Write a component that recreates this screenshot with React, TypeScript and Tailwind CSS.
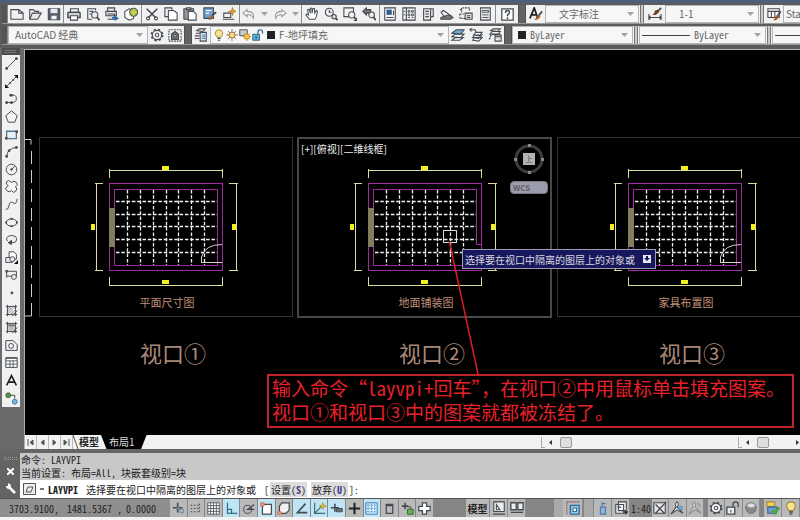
import React from "react";

const INK = "#444a52";
const BLUE = "#4e86b4";

const glyphs = {
  newFile: <path d="M1 3h9l5 4v7H1zM10 3v4h5" />,
  open: (
    <>
      <path d="M2 14V3h4l2 2h4v2" />
      <path d="M2 14l3-7h10l-4 7z" fill="#e8e8e8" />
    </>
  ),
  save: (
    <>
      <path d="M1.500 2h13v12.500h-13z" fill="#59616b" />
      <path d="M4 2h8v5H4z" fill="#e6e9ec" stroke="none" />
      <path d="M5 10h6v4H5z" fill="#f4f4f4" stroke="none" />
    </>
  ),
  print: (
    <>
      <path d="M4 6V2h9v4" />
      <path d="M1 7q0-1 1-1h12q1 0 1 1v5H1z" fill="#cfd2d6" strokeWidth="1.600" />
      <path d="M4 10h8v5H4z" fill="#fff" />
    </>
  ),
  preview: (
    <>
      <path d="M11 4V2H2v12h5M4 5h4M4 8h2" />
      <circle cx="10" cy="9" r="3.500" fill="#e8eef3" />
      <path d="M12.500 11.500l3 3.500" strokeWidth="2" />
    </>
  ),
  publish: (
    <>
      <path d="M3 5V1h8v4M1 5h12v5H1zM3 8h8v6H3" fill="#e4e4e4" />
      <path d="M8 11.500h3v-2.500l5 4-5 3v-2.500H8z" fill="#2c6fae" stroke="none" />
    </>
  ),
  sphere: (
    <>
      <path d="M1 5l5-3 5 2v9l-5 2-5-3z" fill="#fff" />
      <circle cx="11" cy="6" r="4.500" fill="#a3c34a" />
      <path d="M11 2v8M7 6h8" stroke="#e8d24a" />
    </>
  ),
  cut: (
    <>
      <path d="M2 2l10 10M14 2L4 12" strokeWidth="1.700" />
      <circle cx="3.500" cy="13" r="1.700" />
      <circle cx="12.500" cy="13" r="1.700" />
    </>
  ),
  copy: (
    <>
      <path d="M1 1h8v10H1z" />
      <path d="M5 4h6l4 3v8H5z" fill="#fff" />
    </>
  ),
  paste: (
    <>
      <path d="M1 2h11v12H1z" fill="#999" />
      <path d="M4 1h5v2H4z" fill="#eee" />
      <path d="M6 5h6l3 3v7H6z" fill="#fff" />
    </>
  ),
  match: (
    <>
      <path d="M1 1h11v12H1z" fill="#6fa0d0" />
      <path d="M3 4h7M3 7h4" stroke="#fff" />
      <path d="M15 6l-5 4" strokeWidth="2" />
      <path d="M11 9l2 2q-3 5-7 3 3-1 3-4z" fill="#a65a22" stroke="none" />
    </>
  ),
  blockEdit: (
    <>
      <path d="M2 7h8v5H2zM1 14h13" />
      <path d="M12 1l1 3 3 1-3 1-1 3-1-3-3-1 3-1z" fill="#e5a83a" stroke="#c58a2a" />
    </>
  ),
  undo: <path d="M6 3L1 7l5 4V9q5-1 7 4 2-8-7-8z" stroke="#999" fill="#f2f2f2" />,
  redo: <path d="M10 3l5 4-5 4V9q-5-1-7 4-2-8 7-8z" stroke="#999" fill="#f2f2f2" />,
  hand: (
    <path
      d="M5 14L1 9q1-2 3 0L3 3q1-1 2 0l1 4V2q1-1.500 2 0v5l1-5q1.500-1 2 0v5l2-3q1.500 0 1 2-1 7-3 8z"
      fill="#fff"
    />
  ),
  zoom: (
    <>
      <circle cx="6" cy="6" r="4.500" />
      <path d="M6 3.500V6h2.500M9.500 9.500l1 1" />
      <circle cx="11.500" cy="11" r="2.500" fill="#ddd" />
      <path d="M13.500 13l2 2" strokeWidth="2" />
    </>
  ),
  zoomWin: (
    <>
      <path d="M1 1h11v10H1z" />
      <circle cx="10" cy="9" r="3.500" fill="#f2f2f2" />
      <path d="M12.500 11.500l2 2" strokeWidth="2" />
      <path d="M16 12v4h-4z" fill={INK} stroke="none" />
    </>
  ),
  zoomPrev: (
    <>
      <path d="M1 5l4-4v2h5v4H5v2z" fill="#777" />
      <circle cx="11" cy="9" r="3.200" fill="#f2f2f2" />
      <path d="M13 11.500l3 3.500" strokeWidth="2" />
    </>
  ),
  properties: (
    <>
      <path d="M2 1h12v14H2z" fill="#f8f8f8" />
      <path d="M4 3h6v6H4z" fill="#2d5c96" stroke="none" />
      <path d="M12 4v5M4 12h8" />
    </>
  ),
  design: (
    <>
      <path d="M1 1h14v14H1zM5 1v14" />
      <path d="M7 4h2v2H7zM11 4h2v2h-2zM7 8h2v2H7zM11 8h2v2h-2zM7 12h2M11 12h2M2 5h2M2 9h2" strokeWidth="1" />
    </>
  ),
  palette: (
    <>
      <path d="M3 2h8v13H3zM11 2h3v9h-3z" fill="#e8e8e8" />
      <path d="M5 5h4M5 8h4M5 11h4" />
    </>
  ),
  sheets: (
    <>
      <path d="M1 12l9-3 5 3-3 2-11 0z" fill="#777" />
      <path d="M1 6l3-2 10 7M1 6l5 6" />
    </>
  ),
  markup: (
    <>
      <path d="M3 6V1h9v4M1 3h2M1 8h8v5H1z" strokeDasharray="2 1" />
      <path d="M7 7h8v7H7z" fill="#e4e4e4" />
      <path d="M9 10h4M9 12h4" />
    </>
  ),
  calc: (
    <>
      <path d="M3 1h11v14H3z" fill="#e8e8e8" />
      <path d="M5 4h7v2H5zM5 9h7M5 12h7" strokeWidth="1" />
    </>
  ),
  help: (
    <>
      <path d="M1 1h14v14H1z" fill="#fff" strokeWidth="1.500" />
      <path d="M5.500 6q0-3 2.500-3t2.500 2.500Q10.500 7 8 8.500v1.500M8 11.500v2" strokeWidth="1.800" />
    </>
  ),
  textStyle: (
    <>
      <path d="M1 13L6 1l4 12M3 9h6" strokeWidth="2" stroke="#222" />
      <path d="M15 5l-4 5" strokeWidth="2" />
      <path d="M11 9l2 2q-3 5-7 3 3-1 3-4z" fill="#a65a22" stroke="none" />
    </>
  ),
  dimStyle: (
    <>
      <path d="M1 8v7M15 8v7M1 12h14M3 10l-2 2 2 2M13 10l2 2-2 2" />
      <path d="M15 1l-4 4" strokeWidth="2" />
      <path d="M11 3l2 2q-3 5-8 4 3-2 3-5z" fill="#7a3d22" stroke="none" />
    </>
  ),
  tableStyle: (
    <>
      <path d="M1 2h13v10H1zM1 5h13M5 5v7M9 5v7" fill="#fff" />
      <path d="M16 5l-4 5" strokeWidth="2" />
      <path d="M12 9l2 2q-3 5-7 4 3-2 3-5z" fill="#a65a22" stroke="none" />
    </>
  ),
  gear: (
    <>
      <circle cx="8" cy="8" r="6.300" strokeDasharray="2.600 2.400" strokeWidth="2" />
      <circle cx="8" cy="8" r="5.300" fill="#f4f4f4" />
      <circle cx="8" cy="8" r="2" />
    </>
  ),
  workspace: (
    <>
      <path d="M1 2h14v13H1z" strokeDasharray="2 1" />
      <path d="M4 13V7l4-3 4 3v6z" fill="#777" />
      <circle cx="8" cy="9" r="1.500" fill="#ddd" />
    </>
  ),
  layerProps: (
    <>
      <path d="M3 3l3-2h7l-3 3zM2 6h5M1 9h5M1 12h5" />
      <path d="M7 5h7v10H7z" fill="#dce9f2" />
      <path d="M9 8h4M9 10h4M9 12h4" stroke={BLUE} />
    </>
  ),
  bulb: (
    <>
      <path d="M5.500 11Q3 8 3 5.500 3.500 1 8 1t5 4.500Q13 8 10.500 11z" fill="#f8e48a" stroke="#9c8640" />
      <path d="M6 12.500h4M6.500 15h3" strokeWidth="1.600" />
    </>
  ),
  sun: (
    <>
      <path d="M8 0v16M0 8h16M2.500 2.500l11 11M13.500 2.500l-11 11" stroke="#8f7756" />
      <circle cx="8" cy="8" r="4" fill="#f7d98a" stroke="#9a6f35" />
    </>
  ),
  sunVp: (
    <>
      <path d="M1 1h10v8H1z" fill="#ccc" />
      <path d="M5 10h11M10.500 5v11M7 6l7 8M14 6l-7 8" stroke="#c88a20" />
      <circle cx="10.500" cy="10" r="3.500" fill="#f9c54e" stroke="#c88a20" />
    </>
  ),
  unlock: (
    <>
      <path d="M1 7h9v8H1z" fill="#5fb1d8" stroke="#28627f" />
      <path d="M8 7V4q0-3 3-3t3 3v2" strokeWidth="1.600" stroke="#28627f" />
      <path d="M5.500 10v3" stroke="#123" />
    </>
  ),
  layersA: (
    <>
      <path d="M1 14l4-3h9l-4 3zM1 10l4-3h10l-4 4z" fill="#fff" />
      <path d="M1 6l5-4h9l-4 5z" fill="#6ea9cf" />
    </>
  ),
  layersB: (
    <>
      <path d="M4 14l3-3h8l-4 4zM4 11l3-3h8l-4 4zM5 8l3-3h7l-3 4z" fill="#fff" />
      <path d="M1 2h5q2 0 2 3M3 0L1 2l2 2" />
    </>
  ),
  layersC: (
    <>
      <path d="M2 10l3-3h9M2 7l3-3h9l-3 4zM3 3l3-2h8l-3 3zM1 13l2-2" />
      <path d="M8 8h7v7H8z" fill="#e4e4e4" />
      <path d="M8 10h7" />
    </>
  ),
  line: (
    <>
      <path d="M2 14L14 2" />
      <path d="M1 13h2v2H1zM13 1h2v2h-2z" fill={INK} />
    </>
  ),
  xline: (
    <>
      <path d="M2 14L14 2" />
      <path d="M0 11v5h5zM16 0v5l-5-5z" fill="#111" stroke="none" />
      <path d="M5 9h2v2H5zM9 5h2v2H9z" fill={INK} stroke="none" />
    </>
  ),
  pline: (
    <>
      <path d="M1 13h7q6 0 6-5t-6-4" />
      <path d="M1 12h2v2H1zM7 12h2v2H7zM6 3h3v2H6z" fill={INK} />
    </>
  ),
  polygon: <path d="M8 1l7 6-3 8H4L1 7z" fill="#f4f6f8" />,
  rect: (
    <>
      <path d="M2 4h12v9H2z" fill="#e9f0f5" stroke="#56788e" strokeWidth="1.600" />
      <path d="M0 11h3v3H0zM13 3h3v3h-3z" fill={INK} stroke="none" />
    </>
  ),
  arc: (
    <>
      <path d="M2 14Q3 4 14 3" />
      <path d="M1 13h2v2H1zM4 6h2v2H4zM13 2h2v2h-2z" fill={INK} />
    </>
  ),
  circle: (
    <>
      <circle cx="8" cy="8" r="6.500" />
      <path d="M8 8l4-4" />
      <circle cx="8" cy="8" r="1" fill={INK} />
    </>
  ),
  cloud: (
    <path
      d="M4 7Q0 5 2 2t6 1q3-3 6 0t-1 5q3 3 0 6t-5-1q-3 3-6 0t2-6z"
      fill="#f6f6f6"
    />
  ),
  spline: <path d="M1 14q3 1 4-5t5-3 5-5" />,
  ellipse: (
    <>
      <ellipse cx="8" cy="8" rx="6.500" ry="4.500" />
      <path d="M7 3h2v1H7zM7 12h2v1H7zM1 7h1v2H1zM14 7h1v2h-1z" fill={INK} />
    </>
  ),
  ellipseArc: (
    <>
      <path d="M3 10Q0 6 4 4t8 0 1 7l-5 1" />
      <path d="M8 9v5l-4-2z" fill={INK} />
    </>
  ),
  insertBlock: (
    <>
      <path d="M5 1h6l3 3v6H5z" fill="#fff" />
      <path d="M1 8h8v6H1z" fill="#eee" />
      <circle cx="9" cy="10" r="3" fill="#eee" />
      <path d="M16 11v5h-5z" fill="#111" stroke="none" />
    </>
  ),
  makeBlock: (
    <>
      <path d="M2 4h12v6H2zM1 3h2v2H1zM1 11h2" />
      <circle cx="11" cy="11" r="3" fill="#eee" />
    </>
  ),
  point: <path d="M7 7h3v3H7z" fill={INK} stroke="none" />,
  hatch: (
    <>
      <path d="M3 1v14M13 1v14M1 3h14M1 13h14" />
      <path d="M4 6l3-3M4 9l6-6M4 12l8-8M7 13l5-5M5 4l7 8M4 7l5 5" strokeWidth="1" strokeDasharray="1 1" />
      <path d="M9 15l6-7" />
    </>
  ),
  gradient: (
    <>
      <path d="M3 1v14M13 1v14M1 3h14M1 13h14" />
      <path d="M4 4h8v3H4z" fill="#777" stroke="none" />
      <path d="M4 7h8v5H4z" fill="#bbb" stroke="none" />
      <path d="M9 15l6-7" />
    </>
  ),
  region: (
    <>
      <path d="M1 2h9l5 5v7H1z" fill="#f3f3f3" />
      <circle cx="7.500" cy="8.500" r="3" />
    </>
  ),
  table: (
    <>
      <path d="M1 2h14v12H1z" fill="#fff" />
      <path d="M1 3h14M1 6h14M1 10h14M6 5v9M10 5v9" strokeWidth="1" />
    </>
  ),
  mtext: <path d="M2 14L8 2l6 12M4 10h8" stroke="#222" strokeWidth="2" />,
  addSel: (
    <>
      <path d="M6 4h6v4" />
      <circle cx="4" cy="4" r="3" fill="#5c9a48" stroke="#3e6d31" />
      <circle cx="12" cy="12" r="3" fill="#7ab4dc" stroke="#3f78a3" />
    </>
  ),
  infer: (
    <>
      <path d="M7 1v12M1 7h12" strokeWidth="2" />
      <path d="M5 5h4v4H5z" fill="#777" stroke="none" />
      <circle cx="12" cy="11" r="2.500" stroke={BLUE} />
    </>
  ),
  snap: <path d="M2 4h10M2 8h10M2 12h10M13 2v12" strokeDasharray="2 2" />,
  grid: (
    <path
      d="M1 1h14v14H1zM1 4.500h14M1 8h14M1 11.500h14M4.500 1v14M8 1v14M11.500 1v14"
      fill="#fff"
      strokeWidth="1"
    />
  ),
  ortho: <path d="M3 1v13h12M3 9h5v5" stroke="#2f6f87" strokeWidth="1.500" />,
  polar: (
    <>
      <circle cx="7" cy="9" r="5" />
      <path d="M15 3L7 9h8M10 6v4" strokeWidth="1.500" />
    </>
  ),
  osnap: (
    <>
      <path d="M3 3h11v12H3z" fill="#fff" strokeWidth="1.500" />
      <path d="M1 1h4v4H1z" fill="#f5a28a" stroke="#c96e50" />
    </>
  ),
  osnap3d: (
    <>
      <path d="M3 5l3-4h9v9l-4 4H3z" fill="#f1f1f1" strokeWidth="1.500" />
      <path d="M1 12h4v3H1z" fill="#f5a28a" stroke="#c96e50" />
    </>
  ),
  otrack: <path d="M13 2L3 13h12" strokeWidth="2" />,
  ducs: (
    <>
      <path d="M2 1v13h13M2 14l8-8" stroke="#3c6f85" strokeWidth="1.500" />
      <path d="M12 1l1 3 3 1-3 1-1 3-1-3-3-1 3-1z" fill="#efcf4a" stroke="#b79024" />
    </>
  ),
  dyn: (
    <>
      <path d="M6 2v10M1 7h10" strokeWidth="2" />
      <path d="M8 8h7v4H8z" fill="#68757d" />
    </>
  ),
  lwt: <path d="M8 1v14M1 8h14" strokeWidth="2.500" stroke="#222" />,
  transparency: (
    <>
      <path d="M1 1h14v14H1z" fill="#dff1fb" stroke="#3c78b4" />
      <path d="M2 4h12M2 8h12M2 12h12M4 2v12M8 2v12M12 2v12" stroke="#5f9fd6" strokeDasharray="2 1" />
    </>
  ),
  quickProps: <path d="M4 3h8v11H4zM4 4.500h8" strokeWidth="1.500" />,
  cycling: (
    <>
      <path d="M5 1v8M1 5h8" strokeWidth="2" />
      <path d="M8 6h4v3" />
      <path d="M8 9h7v6H8z" fill="#63b356" stroke="#346b2c" />
    </>
  ),
  annoMon: <path d="M5.500 1h5v4.500H15v5h-4.500V15h-5v-4.500H1v-5h4.500z" fill="#fff" strokeWidth="1.500" />,
  maxVp: (
    <>
      <path d="M2 1h12v11H2zM1 15h14" fill="#eee" />
      <path d="M5 10V4l4 6z" />
    </>
  ),
  quickView: <path d="M1 2h6v8H1zM9 2h6v8H9zM1 13h14" fill="#eee" strokeWidth="1.500" />,
  vpScale: (
    <>
      <path d="M5 5h10v10H5z" fill="#9cc8e6" stroke="#2f6ea0" strokeWidth="1.600" />
      <path d="M8 8h4v4H8z" fill="#fff" stroke="#2f6ea0" />
      <path d="M1 1h14M1 1v14" stroke="#9b4e4e" strokeDasharray="2 1" />
    </>
  ),
  bottle: (
    <>
      <path d="M5 7h6v8H5z" fill="#8db5dc" stroke="#4c79a4" />
      <path d="M7 1v5M7 3h4" stroke="#4c79a4" />
    </>
  ),
  vpLock: (
    <>
      <path d="M5 1h9v10H5zM2 4h9v10H2z" fill="#f2f2f2" />
      <path d="M4 7h4M11 12h5l-2.500 3z" fill="#222" />
    </>
  ),
  annoScale: (
    <>
      <path d="M1 2h13v12H1z" fill="#e6e6e6" />
      <path d="M15 1L3 14M3 4l10 10" strokeWidth="1.500" />
    </>
  ),
  annoVis: (
    <>
      <path d="M8 1q3 2 0 6l7 7-7-4-7 5 6-8q-2-4 1-6z" fill="#f8f8f8" />
      <circle cx="12" cy="8" r="2" fill="#86b6df" stroke={BLUE} />
    </>
  ),
  annoAuto: (
    <path d="M7 1q3 2 1 6l7 7-7-4-7 5 5-8q-2-4 1-6zM11 2l3 4" fill="#ccc" stroke="#8b8b8b" />
  ),
  lockUi: (
    <>
      <path d="M1 7h9v8H1z" fill="#eee" strokeWidth="1.500" />
      <path d="M8 7V4q0-3 3-3t3 3v3" strokeWidth="1.500" />
      <path d="M5.500 10v3" />
    </>
  ),
  isolate: (
    <>
      <circle cx="8" cy="8" r="6" fill="#888" stroke="#777" />
      <path d="M3 5q6 5 10 0Q8 0 3 5z" fill="#ddd" stroke="none" />
    </>
  ),
  hardware: (
    <>
      <path d="M1 1h9v5H1z" fill="#f4d65c" stroke="#a58525" />
      <path d="M2 7h10v7H2z" fill="#6a9fd0" stroke="#39658f" />
      <path d="M7 11l3 3 5-7" stroke="#4da63a" strokeWidth="3" />
    </>
  ),
};

type GlyphName = keyof typeof glyphs;

const Icon = ({ name, size = 14 }: { name: GlyphName; size?: number }) => (
  <svg
    width={size}
    height={size}
    viewBox="0 0 16 16"
    fill="none"
    stroke={INK}
    strokeWidth="1.200"
    className="shrink-0"
    aria-hidden="true"
  >
    {glyphs[name]}
  </svg>
);

const ToolButton = ({ name, size }: { name: GlyphName; size?: number }) => (
  <button aria-label={name} className="flex items-center justify-center">
    <Icon name={name} size={size} />
  </button>
);

const Caret = () => (
  <svg width="7" height="4" viewBox="0 0 7 4" className="shrink-0 pointer-events-none" aria-hidden="true">
    <path d="M0 0h7L3.500 4z" fill="#a3a3a3" />
  </svg>
);

const Group = ({ names, className }: { names: GlyphName[]; className: string }) => (
  <div className={`flex items-center justify-around shrink-0 border-r border-[#8a8a8a] ${className}`}>
    {names.map((name) => (
      <ToolButton key={name} name={name} />
    ))}
  </div>
);

const Grip = () => (
  <div className="w-1 mx-px shrink-0 border-x border-[#777] bg-[#c9c9c9]" />
);

const DockGap = () => (
  <div className="w-2 shrink-0 bg-[#626262] border-x border-[#505050]" />
);

const Picker = ({
  label,
  value,
  className,
  children,
}: {
  label: string;
  value: string;
  className: string;
  children?: React.ReactNode;
}) => (
  <div className={`flex items-center pr-1 border border-[#b5b5b5] bg-[#f7f7f7] ${className}`}>
    {children}
    <select
      aria-label={label}
      className="appearance-none flex-1 min-w-0 h-4 leading-4 bg-transparent text-[10px] text-[#666] outline-none"
    >
      <option>{value}</option>
    </select>
    <Caret />
  </div>
);

const Toolbars = () => (
  <header className="shrink-0 bg-[#5c5c5c] border-t-3 border-[#4c6177] pt-0.5 pl-0.5">
    <div className="flex h-[19px] bg-[#f1f1f1] overflow-hidden border-b border-[#999]">
      <div className="w-[6px] shrink-0 bg-[#555] border-r border-[#888]" />
      <Group className="w-[56px]" names={["newFile", "open", "save"]} />
      <Group className="w-[78px]" names={["print", "preview", "publish", "sphere"]} />
      <Group className="w-[98px]" names={["cut", "copy", "paste", "match", "blockEdit"]} />
      <div className="flex w-[62px] shrink-0 items-center justify-around border-r border-[#8a8a8a]">
        <ToolButton name="undo" />
        <Caret />
        <ToolButton name="redo" />
        <Caret />
      </div>
      <Group className="w-[78px]" names={["hand", "zoom", "zoomWin", "zoomPrev"]} />
      <Group
        className="w-[116px]"
        names={["properties", "design", "palette", "sheets", "markup", "calc"]}
      />
      <div className="flex w-[22px] shrink-0 items-center justify-center">
        <ToolButton name="help" size={13} />
      </div>
      <DockGap />
      <div className="flex w-[19px] shrink-0 items-center justify-center">
        <ToolButton name="textStyle" />
      </div>
      <Picker label="文字样式" value="文字标注" className="w-[94px] shrink-0 pl-[13px]" />
      <Grip />
      <div className="flex w-5 shrink-0 items-center justify-center">
        <ToolButton name="dimStyle" />
      </div>
      <Picker label="标注样式" value="1-1" className="w-[94px] shrink-0 pl-[13px]" />
      <Grip />
      <div className="flex w-[18px] shrink-0 items-center justify-center">
        <ToolButton name="tableStyle" />
      </div>
      <Picker label="表格样式" value="Standard" className="min-w-[94px] flex-1 pl-[2px]" />
    </div>

    <div className="mt-0.5 mb-[3px] flex h-[19px] bg-[#f1f1f1] overflow-hidden border-b border-[#999]">
      <div className="w-[6px] shrink-0 bg-[#555] border-r border-[#888]" />
      <Picker label="工作空间" value="AutoCAD 经典" className="w-[140px] shrink-0 pl-[6px]" />
      <div className="flex w-[36px] shrink-0 items-center justify-around">
        <ToolButton name="gear" />
        <ToolButton name="workspace" />
      </div>
      <DockGap />
      <div className="flex w-[18px] shrink-0 items-center justify-center">
        <ToolButton name="layerProps" />
      </div>
      <Picker label="图层" value="F-地坪填充" className="w-[239px] shrink-0 pl-[2px]">
        <div className="mr-1 flex items-center gap-px">
          <Icon name="bulb" size={12} />
          <Icon name="sun" size={12} />
          <Icon name="sunVp" size={12} />
          <Icon name="unlock" size={12} />
          <span className="ml-0.5 h-2 w-2 bg-[#222]" />
        </div>
      </Picker>
      <div className="flex w-[55px] shrink-0 items-center justify-around">
        <ToolButton name="layersA" />
        <ToolButton name="layersB" />
        <ToolButton name="layersC" />
      </div>
      <DockGap />
      <Picker label="颜色" value="ByLayer" className="w-[121px] shrink-0 pl-[5px] font-['Noto_Sans_Mono_CJK_SC','Noto_Sans_CJK_SC',monospace]">
        <span className="mr-1 h-2 w-2 shrink-0 bg-[#222]" />
      </Picker>
      <Grip />
      <Picker label="线型" value="ByLayer" className="w-[127px] shrink-0 pl-0.5 font-['Noto_Sans_Mono_CJK_SC','Noto_Sans_CJK_SC',monospace]">
        <span className="mr-1 h-px w-12 shrink-0 bg-[#444]" />
      </Picker>
      <Grip />
      <Picker label="线宽" value="ByLayer" className="min-w-[94px] flex-1 pl-0.5">
        <span className="mr-1 h-px w-12 shrink-0 bg-[#444]" />
      </Picker>
    </div>
  </header>
);

const drawTools: GlyphName[] = [
  "line", "xline", "pline", "polygon", "rect", "arc", "circle", "cloud", "spline", "ellipse",
  "ellipseArc", "insertBlock", "makeBlock", "point", "hatch", "gradient", "region", "table", "mtext", "addSel",
];

const DrawPalette = () => (
  <aside className="w-6 shrink-0 bg-[#6a6a6a] pl-0.5">
    <div className="h-[7px] w-[18px] bg-[#4d4d4d] px-0.5 pt-0.5">
      <div className="h-[3px] w-3 border-y border-[#777]" />
    </div>
    <div className="flex h-[352px] w-[18px] flex-col items-center justify-around bg-[#f1f1f1]">
      {drawTools.map((name) => (
        <ToolButton key={name} name={name} size={13} />
      ))}
    </div>
  </aside>
);

// Room plan, origin at the outer wall's top left corner
const RoomPlan = ({ x, y, door, title, caption }: {
  x: number;
  y: number;
  door: boolean;
  title: string;
  caption: string;
}) => (
  <g transform={`translate(${x} ${y})`} fill="none">
    <g stroke="#d9dba0" strokeWidth="1">
      <path d="M.5-12.500h113M.5-14v9M113.500-14v9" />
      <path d="M.5 102.500h113M.5 94v9M113.500 94v9" />
      <path d="M-12.500.5v87M-14 .5h8M-14 87.500h8" />
      <path d="M127.500.5v87M120 .5h9M120 87.500h9" />
    </g>
    <g fill="#f4f01c">
      <rect x="53" y="-17" width="7" height="4" />
      <rect x="53" y="97" width="7" height="4" />
      <rect x="-18" y="41" width="4" height="6" />
      <rect x="123" y="41" width="4" height="6" />
    </g>
    <g stroke="#a02aa3">
      <rect x=".5" y=".5" width="113" height="87" />
      {door ? (
        <path d="M108.500 61V6.500H5.500v76h103v-21" />
      ) : (
        <path d="M113 61.500h-4.500v-55H5.500v76h103" />
      )}
    </g>
    <g stroke="#f2f2f2" strokeWidth="1.300" strokeDasharray="3.500 1.800">
      <path d="M18.500 7v75M31.500 7v75M44.500 7v75M57.500 7v75M69.500 7v75M82.500 7v75M95.500 7v75" />
      <path d="M7 18.500h101M7 31.500h101M7 43.500h101M7 56.500h101M7 69.500h101" />
    </g>
    <rect x="0" y="25" width="6" height="39" fill="#827d5c" />
    {door && (
      <path d="M92 79.500h21M92.500 79v-5Q96 61.500 113 61.500" stroke="#d6d6c0" strokeWidth="1" />
    )}
    <text x="58" y="124" textAnchor="middle" fontSize="11" fill="#c0917a">
      {title}
    </text>
    <text x="31" y="179" fontSize="22" fill="#a88877">
      {caption}
    </text>
  </g>
);

const Canvas = () => (
  <main className="relative min-h-[385px] flex-1 overflow-hidden bg-black">
    <svg className="absolute inset-0 h-full w-full" role="img" aria-label="布局1">
      <path d="M0 89.500h6v5M6.500 262v4H0" fill="none" stroke="#ccc" />
      <path d="M6.500 101v165" stroke="#ccc" strokeDasharray="13 6" />
      <rect x="14.500" y="87.500" width="253" height="179" fill="none" stroke="#333" />
      <rect x="273" y="88" width="253" height="179" fill="none" stroke="#484848" strokeWidth="2" />
      <path d="M800 87.500H532.500v179H800" fill="none" stroke="#333" />
      <RoomPlan x={84} y={133} door title="平面尺寸图" caption="视口①" />
      <RoomPlan x={343} y={133} door={false} title="地面铺装图" caption="视口②" />
      <RoomPlan x={603} y={133} door title="家具布置图" caption="视口③" />
      <text x="276" y="103" fontSize="10" fill="#eee">[+][俯视][二维线框]</text>
      <g transform="translate(504 109)">
        <circle r="13" fill="none" stroke="#3d3d3d" strokeWidth="3" />
        <path d="M-1-15h3v3h-3zM-1 12h3v3h-3zM-15-1h3v3h-3zM12-1h3v3h-3z" fill="#888" />
        <rect x="-6" y="-6" width="12" height="12" fill="#b2b2b2" />
        <text y="3" textAnchor="middle" fontSize="8" fill="#555">上</text>
      </g>
      <rect x="418.500" y="180.500" width="13" height="12" fill="none" stroke="#ddd" />
      <path d="M424.500 192L453 324" stroke="#dd1c22" strokeWidth="1.500" />
    </svg>

    <button className="absolute left-[485px] top-[131px] h-[13px] w-[38px] rounded border border-[#77778a] bg-[#9c9cab] pl-0.5 text-left text-[8px] leading-[11px] font-bold text-[#5e5e6c]">
      WCS
    </button>

    <div className="absolute left-[437px] top-[199px] flex h-5 w-[194px] items-center justify-between border border-[#9c9cb4] bg-[#17175e] pl-0.5 pr-1 text-[10px] text-[#d8d8dc]">
      <span className="whitespace-nowrap">选择要在视口中隔离的图层上的对象或</span>
      <svg width="8" height="8" viewBox="0 0 8 8" className="shrink-0" aria-hidden="true">
        <path d="M0 0h8v8H0z" fill="#e8e8f4" />
        <path d="M3 1h2v2h2L4 6 1 3h2z" fill="#17175e" />
      </svg>
    </div>

    <p className="absolute left-[242px] top-[324px] w-[527px] border-2 border-[#c4232a] px-[3px] pb-0.5 font-['Noto_Sans_Mono_CJK_SC','Noto_Sans_CJK_SC',monospace] text-[19px] leading-6 whitespace-nowrap text-[#e8202a]">
      输入命令“layvpi+回车”，在视口②中用鼠标单击填充图案。
      <br />
      视口①和视口③中的图案就都被冻结了。
    </p>
  </main>
);

const Arrow = ({ d }: { d: string }) => (
  <button aria-label="滚动" className="flex h-full w-3 items-center justify-center border-r border-[#bbb]">
    <svg width="7" height="7" viewBox="0 0 7 7" aria-hidden="true">
      <path d={d} fill="#555" stroke="#555" />
    </svg>
  </button>
);

const ScrollStub = () => (
  <div className="flex h-full items-center">
    <span className="mr-1 h-[11px] w-1 border-b border-l border-[#aaa]" />
    <svg width="3" height="5" viewBox="0 0 3 5" aria-hidden="true">
      <path d="M3 0v5L0 2.500z" fill="#333" />
    </svg>
    <span className="ml-2 h-[11px] w-3 rounded-xs border border-[#999] bg-[#dedede]" />
  </div>
);

const LayoutTabs = () => (
  <nav className="flex h-[14px] shrink-0 items-center bg-[#f2f2f2] text-[10px]">
    <Arrow d="M1 0v7M6 1v5L3 3.500z" />
    <Arrow d="M5 1v5L2 3.500z" />
    <Arrow d="M2 1v5l3-2.500z" />
    <Arrow d="M6 0v7M1 1v5l3-2.500z" />
    <svg width="6" height="14" viewBox="0 0 6 14" className="shrink-0" aria-hidden="true">
      <path d="M0 0l5 14" stroke="#555" />
    </svg>
    <button className="h-full px-0 leading-[14px] font-bold text-[#222]">模型</button>
    <button className="ml-0.5 h-full bg-black pr-3 pl-2 leading-[14px] text-[#ddd] [clip-path:polygon(0_0,100%_0,88%_100%,12%_100%)]">
      布局1
    </button>
    <div className="ml-auto flex h-full items-center pr-px">
      <div className="w-[197px]">
        <ScrollStub />
      </div>
      <ScrollStub />
      <svg width="3" height="5" viewBox="0 0 3 5" className="ml-[27px]" aria-hidden="true">
        <path d="M0 0v5l3-2.500z" fill="#333" />
      </svg>
    </div>
  </nav>
);

const CommandLine = () => (
  <section className="flex shrink-0 border-t-4 border-[#666] bg-[#c8c8c8] font-['Noto_Sans_Mono_CJK_SC','Noto_Sans_CJK_SC',monospace] text-[10px] text-[#222]">
    <div className="flex w-5 shrink-0 flex-col items-center justify-between bg-[#646464] pt-1 pb-1">
      <span className="h-[3px] w-[13px] border-y border-dotted border-[#999]" />
      <button aria-label="关闭">
        <svg width="7" height="7" viewBox="0 0 7 7" aria-hidden="true">
          <path d="M0 0l7 7M7 0L0 7" stroke="#fff" strokeWidth="2" />
        </svg>
      </button>
      <button aria-label="自定义">
        <svg width="11" height="11" viewBox="0 0 11 11" aria-hidden="true">
          <path d="M4 4l6 6" stroke="#fff" strokeWidth="2.500" />
          <path d="M1 3q0 3 3 3 2-1 2-3T3 0v3z" fill="#fff" />
        </svg>
      </button>
    </div>
    <div className="min-w-0 flex-1">
      <div className="h-[27px] pl-px leading-[13px]">
        <p>命令: LAYVPI</p>
        <p>当前设置: 布局=All, 块嵌套级别=块</p>
      </div>
      <div className="flex h-[18px] items-center bg-white pl-[3px] whitespace-pre">
        <svg width="13" height="12" viewBox="0 0 13 12" fill="none" stroke="#555" aria-hidden="true">
          <path d="M.5.5h12v11H.5z" fill="#eee" />
          <path d="M3 9l2-5h5L8 9z" />
        </svg>
        <span className="ml-1 w-1 border-t-2 border-[#777]" />
        <label htmlFor="command" className="ml-1 flex items-center">
          <b className="mr-2">LAYVPI</b>
          <span className="mr-2">选择要在视口中隔离的图层上的对象或</span>
          <span className="mr-px">[</span>
          <button className="bg-[#dcdcdc] px-px">设置(<b className="text-[#3b3b90]">S</b>)</button>
          <button className="ml-1 bg-[#dcdcdc] px-px">放弃(<b className="text-[#3b3b90]">U</b>)</button>
          <span className="ml-px">]:</span>
        </label>
        <input id="command" className="min-w-0 flex-1 bg-transparent pl-1 outline-none" />
      </div>
    </div>
  </section>
);

const modes: { name: GlyphName; on?: boolean }[] = [
  { name: "infer" },
  { name: "snap" },
  { name: "grid" },
  { name: "ortho", on: true },
  { name: "polar" },
  { name: "osnap", on: true },
  { name: "osnap3d" },
  { name: "otrack", on: true },
  { name: "ducs", on: true },
  { name: "dyn", on: true },
  { name: "lwt" },
  { name: "transparency", on: true },
  { name: "quickProps" },
  { name: "cycling" },
  { name: "annoMon" },
];

const StatusGroup = ({ names, className }: { names: GlyphName[]; className: string }) => (
  <div className={`flex h-full shrink-0 ${className}`}>
    {names.map((name) => (
      <button
        key={name}
        aria-label={name}
        className="flex h-full flex-1 items-center justify-center border-r border-[#8a8a8a] bg-[#b9b9b9]"
      >
        <Icon name={name} />
      </button>
    ))}
  </div>
);

const StatusBar = () => (
  <footer className="shrink-0 border-t border-b-3 border-t-[#555] border-b-[#f4f4f4] bg-[#858585] font-['Noto_Sans_Mono_CJK_SC','Noto_Sans_CJK_SC',monospace] text-[10px] text-[#222]">
    <div className="flex h-[18px] items-center">
      <span className="flex w-[170px] shrink-0 items-center self-stretch bg-[#8e8e8e] pl-[9px]">
        <span className="mr-2">3703.9100,</span>
        <span className="mr-1">1481.5367 ,</span>
        <span>0.0000</span>
      </span>
      <div className="grid h-full w-[264px] shrink-0 grid-cols-15">
        {modes.map(({ name, on }) => (
          <button
            key={name}
            aria-label={name}
            aria-pressed={!!on}
            className={`flex items-center justify-center border-r border-[#858585] ${on ? "bg-[#bfe4f3]" : "bg-[#b9b9b9]"}`}
          >
            <Icon name={name} size={13} />
          </button>
        ))}
      </div>
      <div className="min-w-2 flex-1" />
      <button className="h-full w-6 shrink-0 border-r border-[#858585] bg-[#b9b9b9] font-bold">模型</button>
      <StatusGroup className="w-9" names={["maxVp", "quickView"]} />
      <div className="ml-7 h-full w-[9px] shrink-0 bg-[#aaa]" />
      <StatusGroup className="w-5" names={["vpScale"]} />
      <div className="mx-px h-full w-[9px] shrink-0 bg-[#aaa]" />
      <StatusGroup className="w-9" names={["bottle", "vpLock"]} />
      <button className="h-full w-[22px] shrink-0">1:40</button>
      <StatusGroup className="w-[52px]" names={["annoScale", "annoVis", "annoAuto"]} />
      <StatusGroup className="ml-1 w-[52px]" names={["gear", "lockUi", "isolate"]} />
      <StatusGroup className="ml-1 w-9" names={["hardware", "bulb"]} />
    </div>
  </footer>
);

export default function App() {
  return (
    <div className="flex min-h-screen w-full flex-col overflow-hidden bg-[#5f5f5f] font-['Noto_Sans_CJK_SC','Liberation_Sans',sans-serif]">
      <Toolbars />
      <div className="flex flex-1">
        <DrawPalette />
        <div className="mt-px flex min-w-0 flex-1 flex-col border-t border-l border-[#b0b0b0]">
          <Canvas />
          <LayoutTabs />
        </div>
      </div>
      <CommandLine />
      <StatusBar />
    </div>
  );
}
